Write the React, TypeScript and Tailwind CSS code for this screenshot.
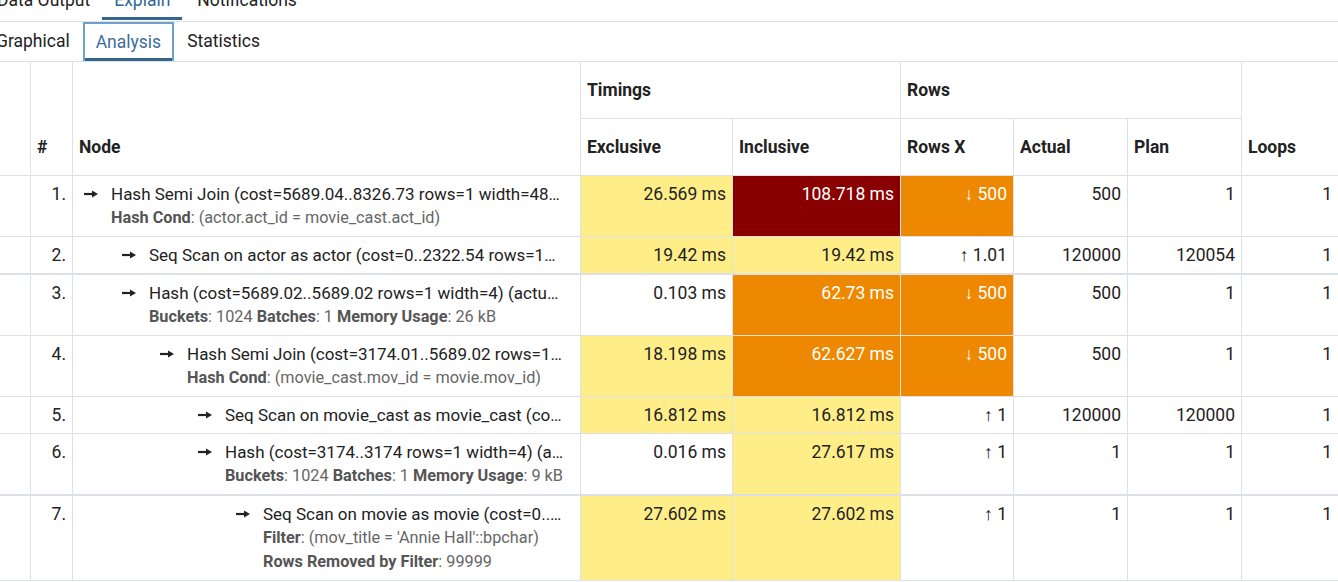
import React from "react";

type Detail = { label: string; value: string }[];
type Row = {
  n: number;
  level: number;
  text: string;
  details: Detail[];
  excl: string;
  exclBg: string;
  incl: string;
  inclBg: string;
  rx: string;
  rxBg: string;
  actual: string;
  plan: string;
  loops: string;
  thick?: boolean;
};

const Y = "bg-[#ffee88] text-[#222]";
const O = "bg-[#ee8800] text-white";
const R = "bg-[#880000] text-white";
const W = "bg-white text-[#222]";

const rows: Row[] = [
  {
    n: 1,
    level: 0,
    text: "Hash Semi Join (cost=5689.04..8326.73 rows=1 width=48…",
    details: [[{ label: "Hash Cond", value: "(actor.act_id = movie_cast.act_id)" }]],
    excl: "26.569 ms",
    exclBg: Y,
    incl: "108.718 ms",
    inclBg: R,
    rx: "↓ 500",
    rxBg: O,
    actual: "500",
    plan: "1",
    loops: "1",
  },
  {
    n: 2,
    level: 1,
    text: "Seq Scan on actor as actor (cost=0..2322.54 rows=1…",
    details: [],
    excl: "19.42 ms",
    exclBg: Y,
    incl: "19.42 ms",
    inclBg: Y,
    rx: "↑ 1.01",
    rxBg: W,
    actual: "120000",
    plan: "120054",
    loops: "1",
    thick: true,
  },
  {
    n: 3,
    level: 1,
    text: "Hash (cost=5689.02..5689.02 rows=1 width=4) (actu…",
    details: [
      [
        { label: "Buckets", value: "1024" },
        { label: "Batches", value: "1" },
        { label: "Memory Usage", value: "26 kB" },
      ],
    ],
    excl: "0.103 ms",
    exclBg: W,
    incl: "62.73 ms",
    inclBg: O,
    rx: "↓ 500",
    rxBg: O,
    actual: "500",
    plan: "1",
    loops: "1",
  },
  {
    n: 4,
    level: 2,
    text: "Hash Semi Join (cost=3174.01..5689.02 rows=1…",
    details: [[{ label: "Hash Cond", value: "(movie_cast.mov_id = movie.mov_id)" }]],
    excl: "18.198 ms",
    exclBg: Y,
    incl: "62.627 ms",
    inclBg: O,
    rx: "↓ 500",
    rxBg: O,
    actual: "500",
    plan: "1",
    loops: "1",
  },
  {
    n: 5,
    level: 3,
    text: "Seq Scan on movie_cast as movie_cast (co…",
    details: [],
    excl: "16.812 ms",
    exclBg: Y,
    incl: "16.812 ms",
    inclBg: Y,
    rx: "↑ 1",
    rxBg: W,
    actual: "120000",
    plan: "120000",
    loops: "1",
  },
  {
    n: 6,
    level: 3,
    text: "Hash (cost=3174..3174 rows=1 width=4) (a…",
    details: [
      [
        { label: "Buckets", value: "1024" },
        { label: "Batches", value: "1" },
        { label: "Memory Usage", value: "9 kB" },
      ],
    ],
    excl: "0.016 ms",
    exclBg: W,
    incl: "27.617 ms",
    inclBg: Y,
    rx: "↑ 1",
    rxBg: W,
    actual: "1",
    plan: "1",
    loops: "1",
    thick: true,
  },
  {
    n: 7,
    level: 4,
    text: "Seq Scan on movie as movie (cost=0..…",
    details: [
      [{ label: "Filter", value: "(mov_title = 'Annie Hall'::bpchar)" }],
      [{ label: "Rows Removed by Filter", value: "99999" }],
    ],
    excl: "27.602 ms",
    exclBg: Y,
    incl: "27.602 ms",
    inclBg: Y,
    rx: "↑ 1",
    rxBg: W,
    actual: "1",
    plan: "1",
    loops: "1",
  },
];

const indent = ["pl-[5px]", "pl-[43px]", "pl-[81px]", "pl-[119px]", "pl-[157px]"];

function Arrow() {
  return (
    <svg width="14" height="10" viewBox="0 0 14 10" className="shrink-0 mr-[13px]">
      <line x1="0" y1="5" x2="9" y2="5" stroke="#222" strokeWidth="2.2" />
      <polygon points="8,1.5 14,5 8,8.5" fill="#222" />
    </svg>
  );
}

export default function App() {
  const bd = "border-[#dde0e6]";
  return (
    <div className="w-[1338px] h-[582px] overflow-hidden bg-white font-[Roboto,sans-serif] text-[17.5px] text-[#222]">
      {/* top tab row */}
      <div className={`-mt-[21px] h-[43px] border-b ${bd} flex ml-[-15px]`}>
        <div className="px-[12px] h-full flex items-center">Data Output</div>
        <div className="relative px-[12px] h-full flex items-center text-[#326690]">
          Explain
          <div className="absolute left-0 right-0 bottom-[1px] h-[3px] bg-[#326690]" />
        </div>
        <div className="pl-[15px] pr-[12px] h-full flex items-center">Notifications</div>
      </div>
      {/* second tab row */}
      <div className={`h-[40px] border-b ${bd} flex ml-[-17px]`}>
        <div className="px-[11px] border-x-2 border-transparent h-full flex items-center">Graphical</div>
        <div className="relative px-[11px] border-x-2 border-t-2 border-[#6fa0cc] h-full flex items-center text-[#3b6e9c]">
          Analysis
          <div className="absolute left-0 right-0 bottom-0 h-[3px] bg-[#326690]" />
        </div>
        <div className="px-[11px] border-x-2 border-transparent h-full flex items-center">Statistics</div>
      </div>
      {/* table */}
      <table className="table-fixed border-separate border-spacing-0 w-[1338px]">
        <colgroup>
          <col className="w-[31px]" />
          <col className="w-[42px]" />
          <col className="w-[508px]" />
          <col className="w-[152px]" />
          <col className="w-[168px]" />
          <col className="w-[113px]" />
          <col className="w-[114px]" />
          <col className="w-[114px]" />
          <col className="w-[96px]" />
        </colgroup>
        <thead>
          <tr className="font-bold leading-[24px] text-left">
            <th rowSpan={2} className={`border-r border-b ${bd} px-[6px] py-[16px] align-bottom`}></th>
            <th rowSpan={2} className={`border-r border-b ${bd} px-[6px] py-[16px] align-bottom`}>#</th>
            <th rowSpan={2} className={`border-r border-b ${bd} px-[6px] py-[16px] align-bottom`}>Node</th>
            <th colSpan={2} className={`border-r border-b ${bd} px-[6px] py-[16px] align-middle`}>Timings</th>
            <th colSpan={3} className={`border-r border-b ${bd} px-[6px] py-[16px] align-middle`}>Rows</th>
            <th rowSpan={2} className={`border-b ${bd} px-[6px] py-[16px] align-bottom`}>Loops</th>
          </tr>
          <tr className="font-bold leading-[24px] text-left">
            <th className={`border-r border-b ${bd} px-[6px] py-[16px]`}>Exclusive</th>
            <th className={`border-r border-b ${bd} px-[6px] py-[16px]`}>Inclusive</th>
            <th className={`border-r border-b ${bd} px-[6px] py-[16px]`}>Rows X</th>
            <th className={`border-r border-b ${bd} px-[6px] py-[16px]`}>Actual</th>
            <th className={`border-r border-b ${bd} px-[6px] py-[16px]`}>Plan</th>
          </tr>
        </thead>
        <tbody>
          {rows.map((r) => {
            const b = r.thick ? "border-b-2" : "border-b";
            const cell = `${b} ${bd} px-[6px] py-[6px] align-top leading-[24px]`;
            return (
              <tr key={r.n}>
                <td className={`${cell} border-r`}></td>
                <td className={`${cell} border-r text-right`}>{r.n}.</td>
                <td className={`${cell} border-r`}>
                  <div className={indent[r.level]}>
                    <div className="flex items-center text-[17px]">
                      <Arrow />
                      <span className="min-w-0 whitespace-nowrap overflow-hidden">{r.text}</span>
                    </div>
                    {r.details.map((d, i) => (
                      <div key={i} className="pl-[27px] text-[16.25px] leading-[24px] whitespace-nowrap overflow-hidden text-[#666]">
                        {d.map((p, j) => (
                          <span key={j}>
                            {j > 0 ? " " : ""}
                            <span className="font-bold text-[#555]">{p.label}</span>: {p.value}
                          </span>
                        ))}
                      </div>
                    ))}
                  </div>
                </td>
                <td className={`${cell} border-r text-right ${r.exclBg}`}>{r.excl}</td>
                <td className={`${cell} border-r text-right ${r.inclBg}`}>{r.incl}</td>
                <td className={`${cell} border-r text-right ${r.rxBg}`}>{r.rx}</td>
                <td className={`${cell} border-r text-right`}>{r.actual}</td>
                <td className={`${cell} border-r text-right`}>{r.plan}</td>
                <td className={`${cell} text-right`}>{r.loops}</td>
              </tr>
            );
          })}
        </tbody>
      </table>
    </div>
  );
}
